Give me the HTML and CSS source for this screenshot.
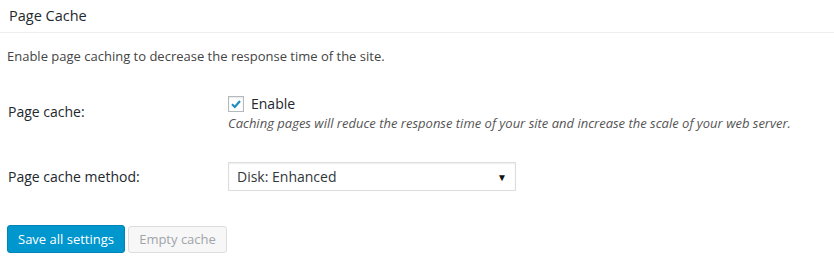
FILE: index.html
```html
<!DOCTYPE html>
<html lang="en">
<head>
    <meta charset="UTF-8">
    <title>Page Cache</title>
    <link rel="stylesheet" href="styles.css">
</head>
<body>
<div class="postbox">
    <h3 class="header">Page Cache</h3>
    <div class="inside">
        <p class="intro">Enable page caching to decrease the response time of the site.</p>
        <div class="row row-cache">
            <div class="row-label">Page cache:</div>
            <div class="row-field">
                <label class="check">
                    <span class="box">
                        <svg width="12" height="10" viewBox="0 0 12 10"><path d="M2 5.2 L4.8 8 L10 2" fill="none" stroke="#1e8cbe" stroke-width="2.2"/></svg>
                    </span>
                    Enable
                </label>
                <div class="desc">Caching pages will reduce the response time of your site and increase the scale of your web server.</div>
            </div>
        </div>
        <div class="row row-method">
            <div class="row-label">Page cache method:</div>
            <div class="row-field">
                <div class="select">
                    <span>Disk: Enhanced</span>
                    <span class="arrow">&#9660;</span>
                </div>
            </div>
        </div>
        <div class="buttons">
            <button class="button primary">Save all settings</button>
            <button class="button disabled">Empty cache</button>
        </div>
    </div>
</div>
</body>
</html>
```

FILE: styles.css
```css
body {
    margin: 0;
    background-color: #fff;
    font-family: "Open Sans", sans-serif;
    color: #23282d;
}

.header {
    margin: 0;
    height: 33px;
    padding: 0 9px;
    box-sizing: border-box;
    border-bottom: 1px solid #eee;
    font-size: 14.5px;
    font-weight: normal;
    line-height: 31px;
}

.inside {
    padding: 0 7px;
}

.intro {
    margin: 13px 0 0 0;
    font-size: 13px;
    line-height: 20px;
    color: #444;
}

.row {
    display: flex;
}

.row-label {
    width: 220px;
    padding-left: 1px;
    font-size: 14px;
    line-height: 20px;
}

.row-cache {
    margin-top: 24px;
}

.row-cache .row-label {
    margin-top: 12px;
}

.check {
    display: flex;
    align-items: center;
    font-size: 14px;
    line-height: 20px;
    gap: 7px;
    margin-top: 4px;
}

.box {
    width: 14px;
    height: 14px;
    border: 1px solid #b4b9be;
    display: flex;
    align-items: center;
    justify-content: center;
    box-shadow: inset 0 1px 2px rgba(0, 0, 0, 0.1);
}

.desc {
    font-size: 13px;
    font-style: italic;
    line-height: 18px;
    color: #555;
}

.row-method {
    margin-top: 30px;
    align-items: center;
}

.select {
    width: 288px;
    height: 29px;
    box-sizing: border-box;
    border: 1px solid #ddd;
    padding: 0 8px 0 8px;
    display: flex;
    align-items: center;
    justify-content: space-between;
    font-size: 14px;
    color: #32373c;
    box-shadow: inset 0 1px 2px rgba(0, 0, 0, 0.07);
}

.arrow {
    font-size: 10px;
    color: #111;
}

.buttons {
    margin-top: 34px;
    display: flex;
    gap: 3px;
    align-items: center;
}

.button {
    height: 28px;
    font-family: "Open Sans", sans-serif;
    font-size: 13px;
    border-radius: 3px;
    padding: 0 10px;
    box-sizing: border-box;
}

.primary {
    width: 118px;
    background-color: #0096ce;
    border: 1px solid #0083b5;
    color: #fff;
}

.disabled {
    width: 99px;
    height: 27px;
    background-color: #f7f7f7;
    border: 1px solid #ddd;
    color: #a0a5aa;
}
```
